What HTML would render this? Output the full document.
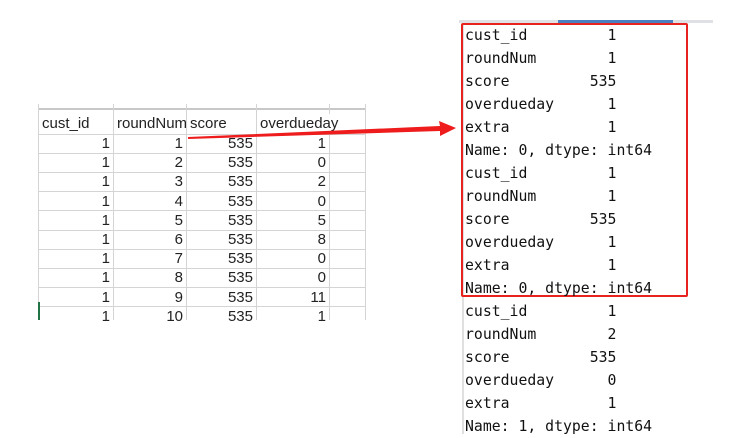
<!DOCTYPE html>
<html><head><meta charset="utf-8"><style>
body{margin:0;width:747px;height:434px;background:#fff;position:relative;overflow:hidden;font-family:"Liberation Sans",sans-serif}
.g{position:absolute;background:#d4d4d4}
.c{position:absolute;font-size:15px;color:#222;line-height:19px}
pre{position:absolute;left:465px;top:24px;margin:0;font-family:"DejaVu Sans Mono","Liberation Mono",monospace;font-size:14.8px;line-height:23px;color:#111}
</style></head><body>
<div class="g" style="left:38px;top:108px;width:327px;height:2px;background:#c8c8c8"></div>
<div id="grid"></div>
<div class="g" style="left:459px;top:20px;width:254px;height:3px;background:#dfe1e5"></div>
<div class="g" style="left:558px;top:20px;width:115px;height:3px;background:#4a7fc1"></div>
<div class="g" style="left:462px;top:23px;width:2px;height:411px;background:#e0e0e0"></div>
<div style="position:absolute;left:461px;top:23px;width:223px;height:270px;border:2px solid #e8231f;border-radius:2px"></div>
<pre>cust_id         1
roundNum        1
score         535
overdueday      1
extra           1
Name: 0, dtype: int64
cust_id         1
roundNum        1
score         535
overdueday      1
extra           1
Name: 0, dtype: int64
cust_id         1
roundNum        2
score         535
overdueday      0
extra           1
Name: 1, dtype: int64</pre>
<div id="hd"></div>
<svg style="position:absolute;left:0;top:0" width="747" height="434">
<polygon points="188,137 440,126 439,121 456,128 440,136 440,131 188,139" fill="#ee1c1c"/>
</svg>
<script>
var g=document.getElementById('grid'),h='';
var cols=[38,113,186,256,329,365];
for(var i=0;i<cols.length;i++)h+='<div class="g" style="left:'+cols[i]+'px;top:104px;width:1px;height:216px"></div>';
for(var r=0;r<10;r++)h+='<div class="g" style="left:38px;top:'+Math.round(133.5+r*19.2)+'px;width:327px;height:1px"></div>';
var hd=['cust_id','roundNum','score','overdueday'];
for(var i=0;i<4;i++)h+='<div class="c" style="left:'+(cols[i]+4)+'px;top:114px;'+(i<3?'width:'+(cols[i+1]-cols[i]-4)+'px;overflow:hidden;':'background:#fff;')+'white-space:nowrap">'+hd[i]+'</div>';
var od=[1,0,2,0,5,8,0,0,11,1];
for(var r=0;r<10;r++){var t=Math.round(134+r*19.2);var v=[1,r+1,535,od[r]];
for(var i=0;i<4;i++)h+='<div class="c" style="left:'+cols[i]+'px;top:'+t+'px;width:'+(cols[i+1]-cols[i]-3)+'px;text-align:right">'+v[i]+'</div>';}
h+='<div class="g" style="left:38px;top:302px;width:2px;height:18px;background:#217346"></div>';
g.innerHTML=h;
</script>
</body></html>
